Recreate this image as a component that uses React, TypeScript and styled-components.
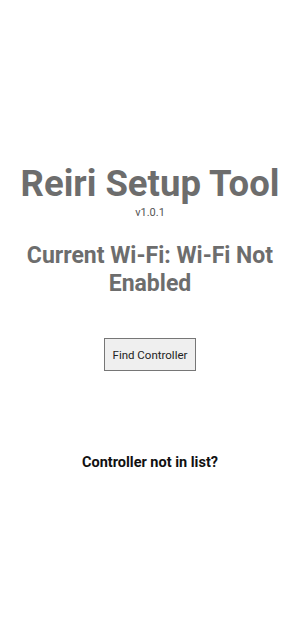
import React from 'react'
import styled, { createGlobalStyle } from 'styled-components'

const GlobalStyle = createGlobalStyle`
  html, body {
    margin: 0;
    padding: 0;
    background: #ffffff;
    font-family: Roboto, "Liberation Sans", sans-serif;
  }
`

export default function App() {
  return (
    <Page>
      <GlobalStyle />
      <Header>
        <Title>Reiri Setup Tool</Title>
        <Version>v1.0.1</Version>
      </Header>
      <WifiStatus>Current Wi-Fi: Wi-Fi Not Enabled</WifiStatus>
      <FindButton type="button">Find Controller</FindButton>
      <HelpLink>Controller not in list?</HelpLink>
    </Page>
  )
}

const Page = styled.div`
  min-height: 619px;
  display: flex;
  flex-direction: column;
  align-items: center;
  padding-top: 162px;
  box-sizing: border-box;
`

const Header = styled.div`
  display: flex;
  flex-direction: column;
  align-items: center;
`

const Title = styled.h1`
  margin: 0;
  font-size: 36.5px;
  line-height: 44px;
  font-weight: 700;
  color: #6d6d6d;
`

const Version = styled.div`
  font-size: 11px;
  line-height: 13px;
  color: #555555;
`

const WifiStatus = styled.h2`
  margin: 23px 0 0;
  width: 270px;
  text-align: center;
  font-size: 23px;
  line-height: 28px;
  font-weight: 700;
  color: #6d6d6d;
`

const FindButton = styled.button`
  margin-top: 40px;
  height: 33px;
  padding: 0 8px;
  background: #efefef;
  border: 1px solid #767676;
  border-radius: 0;
  font-family: Roboto, "Liberation Sans", sans-serif;
  font-size: 11.5px;
  color: #222222;
`

const HelpLink = styled.div`
  margin-top: 83px;
  font-size: 14.5px;
  font-weight: 700;
  color: #111111;
`
